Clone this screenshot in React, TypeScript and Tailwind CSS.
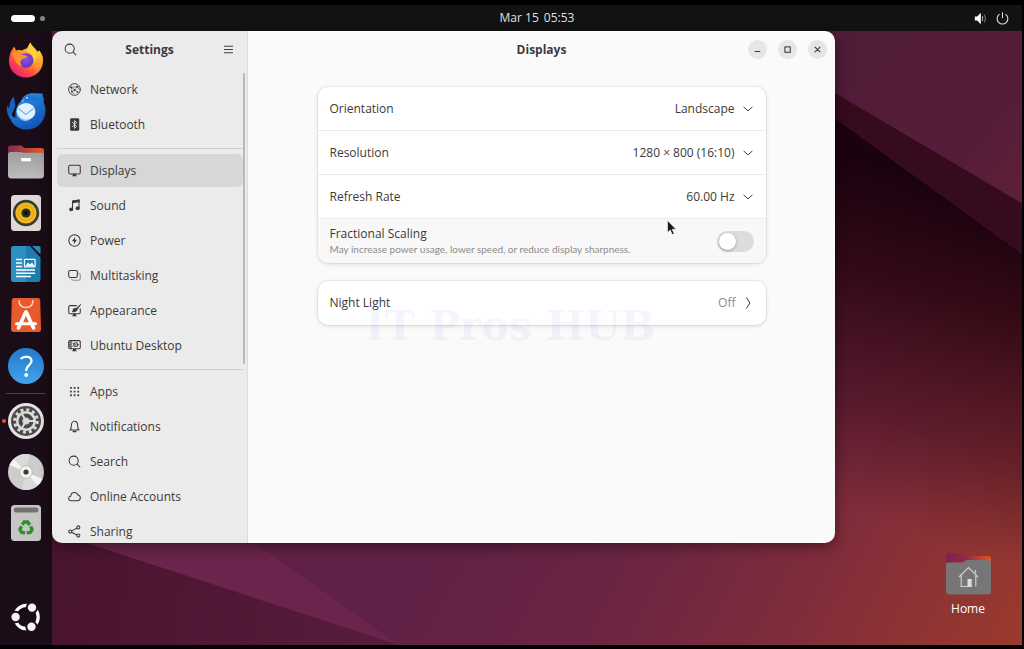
import { useState } from "react";
import type { ReactNode } from "react";

type IconProps = { className?: string };

function Symbolic({ className = "size-[13px]", children }: IconProps & { children: ReactNode }) {
  return (
    <svg
      viewBox="0 0 16 16"
      className={`shrink-0 ${className}`}
      fill="none"
      stroke="currentColor"
      strokeWidth="1.3"
      strokeLinecap="round"
      strokeLinejoin="round"
      aria-hidden="true"
    >
      {children}
    </svg>
  );
}

const SearchIcon = ({ className }: IconProps) => (
  <Symbolic className={className}>
    <circle cx="7" cy="7" r="5.6" />
    <path d="M11.2 11.2 14.6 14.6" />
  </Symbolic>
);

const NetworkIcon = () => (
  <Symbolic>
    <circle cx="8" cy="8" r="7.2" strokeWidth="1.2" />
    <path d="M4 5.2 11.5 4.6 8.2 8.6 4 5.2 4.8 10.6 8.2 8.6 11.6 11M11.5 4.6 13.8 8M4.8 10.6 7.6 13.4" strokeWidth="0.7" />
    <g fill="currentColor" stroke="none">
      <circle cx="4" cy="5.2" r="1.2" />
      <circle cx="11.5" cy="4.6" r="1.3" />
      <circle cx="8.2" cy="8.6" r="1.2" />
      <circle cx="4.8" cy="10.8" r="1.1" />
      <circle cx="11.6" cy="11" r="1.1" />
    </g>
  </Symbolic>
);

const BluetoothIcon = () => (
  <Symbolic>
    <rect x="2.6" y="0.2" width="11.2" height="15.6" rx="1.6" fill="currentColor" stroke="none" />
    <path d="M5.4 5.2 10.6 10.4 8.1 12.8V3.2L10.6 5.6 5.4 10.8" stroke="#ebebeb" strokeWidth="1.1" />
  </Symbolic>
);

const DisplayIcon = () => (
  <Symbolic>
    <rect x="0.9" y="1.6" width="14.2" height="10.6" rx="1.8" />
    <path d="M6.2 12h3.6v1.6l1.4 1.6H4.8l1.4-1.6z" fill="currentColor" stroke="none" />
  </Symbolic>
);

const SoundIcon = () => (
  <Symbolic>
    <path d="M5.6 12.6V2.8L13.6 1.4V11" />
    <path d="M5 1.9 14.3 0.5V3.9L5 5.3z" fill="currentColor" stroke="none" />
    <circle cx="3.9" cy="12.8" r="2.4" fill="currentColor" stroke="none" />
    <circle cx="11.9" cy="11.4" r="2.4" fill="currentColor" stroke="none" />
  </Symbolic>
);

const PowerIcon = () => (
  <Symbolic>
    <circle cx="8" cy="8" r="7" />
    <path d="M8.9 3.4 4.9 8.8H7.5L7.1 12.6 11.1 7.2H8.5z" fill="currentColor" stroke="none" />
  </Symbolic>
);

const MultitaskingIcon = () => (
  <Symbolic>
    <rect x="0.8" y="1.8" width="10.8" height="8.6" rx="2" />
    <path d="M13.4 5.2c1 .2 1.7.8 1.7 1.9v4.6c0 1.4-.8 2.2-2.2 2.2H6.6c-1.2 0-1.9-.5-2.1-1.4" opacity="0.5" />
  </Symbolic>
);

const AppearanceIcon = () => (
  <Symbolic>
    <path d="M10.4 2H2.7C1.6 2 .9 2.7.9 3.8v6.4c0 1.1.7 1.8 1.8 1.8h10.6c1.1 0 1.8-.7 1.8-1.8V6" />
    <path d="M6.2 12h3.6v1.6l1.4 1.6H4.8l1.4-1.6z" fill="currentColor" stroke="none" />
    <path d="M15.4.6 9.6 5.8l1.4 1.4z" fill="currentColor" strokeWidth="0.8" />
    <path d="M9.4 5c-2.4-.1-3.6 1-3.6 2.8 0 1-.5 1.4-1.4 1.6 2.8 1.4 7 .4 6.9-2.7z" fill="currentColor" stroke="none" />
  </Symbolic>
);

const UbuntuDesktopIcon = () => (
  <Symbolic>
    <rect x="0.9" y="2" width="14.2" height="10" rx="1.4" />
    <path d="M3.8 2v10M1.2 4.6h2M1.2 7h2M1.2 9.4h2" strokeWidth="1.2" />
    <circle cx="9.6" cy="7" r="2.3" />
    <path d="M5.8 5.2 7 6M5.8 9 7 8M13 7H12" strokeWidth="1.1" />
    <circle cx="9.6" cy="7" r="0.7" fill="currentColor" stroke="none" />
    <path d="M6.2 12h3.6v1.6l1.4 1.6H4.8l1.4-1.6z" fill="currentColor" stroke="none" />
  </Symbolic>
);

const AppsIcon = () => (
  <Symbolic>
    <g fill="currentColor" stroke="none">
      {[2.5, 7, 11.5].map((y) =>
        [2.5, 7, 11.5].map((x) => <rect key={`${x}-${y}`} x={x} y={y} width="2.2" height="2.2" rx="0.4" />)
      )}
    </g>
  </Symbolic>
);

const BellIcon = () => (
  <Symbolic>
    <path d="M2.4 12.4C4 11.2 4.1 9.6 4.1 7c0-3 1.4-5.4 3.9-5.4S11.9 4 11.9 7c0 2.6.1 4.2 1.7 5.4z" />
    <path d="M6.4 14.2h3.2" strokeWidth="1.8" />
  </Symbolic>
);

const CloudIcon = () => (
  <Symbolic>
    <path d="M4 13.2c-1.9 0-3.2-1.1-3.2-2.7 0-1.5 1-2.5 2.5-2.7C3.5 5 5.3 3 7.9 3c2.2 0 3.7 1.2 4.3 3.2 1.9.3 3 1.6 3 3.4 0 2.2-1.5 3.6-3.7 3.6z" />
  </Symbolic>
);

const ShareIcon = () => (
  <Symbolic>
    <path d="M4.4 7.2 10.9 3.9M4.4 9 10.9 12.2" />
    <circle cx="2.8" cy="8.1" r="1.9" />
    <circle cx="12.7" cy="3" r="1.9" />
    <circle cx="12.7" cy="13" r="1.9" />
  </Symbolic>
);

const groups = [
  [
    { label: "Network", icon: NetworkIcon },
    { label: "Bluetooth", icon: BluetoothIcon },
  ],
  [
    { label: "Displays", icon: DisplayIcon },
    { label: "Sound", icon: SoundIcon },
    { label: "Power", icon: PowerIcon },
    { label: "Multitasking", icon: MultitaskingIcon },
    { label: "Appearance", icon: AppearanceIcon },
    { label: "Ubuntu Desktop", icon: UbuntuDesktopIcon },
  ],
  [
    { label: "Apps", icon: AppsIcon },
    { label: "Notifications", icon: BellIcon },
    { label: "Search", icon: SearchIcon },
    { label: "Online Accounts", icon: CloudIcon },
    { label: "Sharing", icon: ShareIcon },
  ],
];

const displayOptions = [
  { id: "orientation", label: "Orientation", options: ["Landscape", "Portrait Right", "Portrait Left"] },
  { id: "resolution", label: "Resolution", options: ["1280 × 800 (16:10)", "1024 × 768 (4:3)"] },
  { id: "refresh-rate", label: "Refresh Rate", options: ["60.00 Hz", "75.00 Hz"] },
];

/* Dock icons */

const FirefoxIcon = () => (
  <svg viewBox="0 0 36 36" className="size-9" aria-hidden="true">
    <defs>
      <linearGradient id="ff-body" x1="0.85" y1="0.1" x2="0.2" y2="0.95">
        <stop offset="0" stopColor="#ffe14a" />
        <stop offset="0.4" stopColor="#ff9a2c" />
        <stop offset="0.7" stopColor="#ff4a45" />
        <stop offset="1" stopColor="#e3217c" />
      </linearGradient>
      <linearGradient id="ff-flame" x1="0.4" y1="0" x2="0.5" y2="1">
        <stop offset="0" stopColor="#ffe24d" />
        <stop offset="0.5" stopColor="#ffc63a" />
        <stop offset="1" stopColor="#ff8a33" />
      </linearGradient>
      <radialGradient id="ff-globe" cx="0.5" cy="0.4" r="0.6">
        <stop offset="0" stopColor="#9250e8" />
        <stop offset="1" stopColor="#5a3bb5" />
      </radialGradient>
    </defs>
    <path d="M3 9.5 6.2 4.5 8 8.5 11 7.8 14 8.5C16 7 18 6.5 19 6.5 20 4 21.5 1.5 22.5.5 23.5 4 28 6.5 29.5 10L31 8.5C33.5 11 35.2 15 35 19.5 34.5 29 27 35.5 18 35.5 8.5 35.5 1 28.5 1 19 1 15.5 1.8 12 3 9.5z" fill="url(#ff-body)" />
    <path d="M22.5.5C23.5 4 28 6.5 29.5 10.5 32 17 29 24 25 27 31 26 35 22 35 18 35 14 33 10.5 31 8.5L29.5 10C28 6.5 23.5 4 22.5.5z" fill="url(#ff-flame)" />
    <circle cx="18" cy="18.5" r="7.3" fill="url(#ff-globe)" />
    <path d="M4 11C7 9 11 10 13 13 15 12.8 17.5 13.2 19 14.5 18 16.5 15.5 16.2 14 17.5 12 19 12 22 14.5 23.8 11 24.5 6 20 4 11z" fill="#ff9130" />
    <path d="M18.5 9.5C20 5.5 21.5 2.5 22.5.5 23 5 27.5 7.5 28.5 12 29 15 28 18 26.2 20.5 26.5 15 24 11 18.5 9.5z" fill="#ffd040" />
  </svg>
);

const ThunderbirdIcon = () => (
  <svg viewBox="0 0 40 38" className="h-[38px] w-10" aria-hidden="true">
    <defs>
      <linearGradient id="tb-body" x1="0.2" y1="0" x2="0.6" y2="1">
        <stop offset="0" stopColor="#2f8fe6" />
        <stop offset="1" stopColor="#0f55b8" />
      </linearGradient>
    </defs>
    <path d="M7.5 4.5C9 8 8.5 11 9.5 14L4 27C.5 21 .5 17 1 13.5L3 16C3.5 11 5 7 7.5 4.5z" fill="#1761bb" />
    <path d="M15 9C17 3.5 22 1 27.5 1.2L36.5 1.5 37 4.5 38 8 37.5 10C40 15 40 20 38.5 24.5 36 33 28.5 37.5 20.5 37.5 10.5 37.5 2.5 30 3.5 20 4.5 23 7 25 9.5 26 9 18 11 12.5 15 9z" fill="url(#tb-body)" />
    <path d="M16 9C19 4 24 2.5 29 4 33 6 35 9 35.5 13 31 8 26 7.5 22 9z" fill="#1d74d2" />
    <ellipse cx="20" cy="19.5" rx="9.4" ry="8.6" fill="#e2f1fd" />
    <path d="M12.5 16.5 19.8 22.5 27.5 16.5" fill="none" stroke="#7fb4e5" strokeWidth="1.2" />
    <path d="M10.700 20C11.500 26 16 30.500 23.500 29 18 28 13 25.500 10.700 20z" fill="#8bc5f5" />
    <circle cx="21" cy="5.8" r="0.9" fill="#dcecff" />
    <path d="M15 9 19 6.8 17 10z" fill="#b88ae0" />
  </svg>
);

const FilesIcon = () => (
  <svg viewBox="0 0 36 34" className="h-[34px] w-9" aria-hidden="true">
    <defs>
      <linearGradient id="files-back" x1="0" x2="1">
        <stop offset="0" stopColor="#842a4b" />
        <stop offset="1" stopColor="#e65a25" />
      </linearGradient>
      <linearGradient id="files-front" x1="0" y1="0" x2="0" y2="1">
        <stop offset="0" stopColor="#9d9d9d" />
        <stop offset="1" stopColor="#bdbdbd" />
      </linearGradient>
    </defs>
    <path d="M0 3Q0 .5 2.5.5H13L16.5 3H33.5Q36 3 36 5.5V14H0z" fill="url(#files-back)" />
    <path d="M0 9.5Q0 7 2.5 7H12L16 7.8H33.5Q36 7.8 36 10V30Q36 33.5 32.5 33.5H3.5Q0 33.5 0 30z" fill="url(#files-front)" />
    <rect x="13" y="13" width="10" height="3.2" rx="1" fill="#fff" />
  </svg>
);

const RhythmboxIcon = () => (
  <svg viewBox="0 0 36 36" className="size-9" aria-hidden="true">
    <rect x="3" y="0" width="30" height="36" rx="3.5" fill="#dedad3" />
    <circle cx="18" cy="18" r="13.2" fill="#3b3a36" />
    <circle cx="18" cy="18" r="10.6" fill="#f0b91d" />
    <circle cx="18" cy="18" r="7.5" fill="none" stroke="#d99d10" strokeWidth="0.8" />
    <circle cx="18" cy="18" r="4.6" fill="#2d2a22" />
    <circle cx="18" cy="18" r="2" fill="#111" />
  </svg>
);

const WriterIcon = () => (
  <svg viewBox="0 0 36 36" className="size-9" aria-hidden="true">
    <path d="M6 0H22L32.5 11.5V33Q32.5 36 29.5 36H6Q3 36 3 33V3Q3 0 6 0z" fill="#1e7cae" />
    <path d="M6 0H18V36H6Q3 36 3 33V3Q3 0 6 0z" fill="#2b91c2" />
    <path d="M24 0H31Q32.5 0 32.5 1.5V8.5z" fill="#2689ba" />
    <path d="M8 13.5h6M8 17h6M8 20.5h6M8 24h19M8 27.2h19M8 30.5h15" stroke="#fff" strokeWidth="1.5" fill="none" />
    <rect x="16.5" y="13.3" width="10.6" height="7.6" rx="0.6" fill="#2581b2" stroke="#fff" strokeWidth="1.2" />
    <path d="M17.5 20 20 16.5 22 18.5 24 16.5 26.5 20z" fill="#fff" />
  </svg>
);

const AppCenterIcon = () => (
  <svg viewBox="0 0 36 36" className="size-9" aria-hidden="true">
    <path d="M6 1H30Q32 1 32.2 3L33 32Q33 35 30.5 35H5.5Q3 35 3 32L3.8 3Q4 1 6 1z" fill="#e8592b" />
    <path d="M11 3C11 8 14 10.5 18 10.5S25 8 25 3" fill="none" stroke="#f9d5c7" strokeWidth="1.4" />
    <path d="M17.8 15 10.5 31M18.2 15 25.5 31" stroke="#fff" strokeWidth="3.6" strokeLinecap="round" />
    <path d="M8.5 26.8H27.5" stroke="#fff" strokeWidth="3" strokeLinecap="round" />
  </svg>
);

const HelpIcon = () => (
  <svg viewBox="0 0 36 36" className="size-9" aria-hidden="true">
    <defs>
      <linearGradient id="help-bg" x1="0" y1="0" x2="0" y2="1">
        <stop offset="0" stopColor="#2479cb" />
        <stop offset="1" stopColor="#41a3ec" />
      </linearGradient>
    </defs>
    <circle cx="18" cy="18" r="18" fill="url(#help-bg)" />
    <path d="M13.4 10.3C16 8.2 23.5 7.8 23.5 13 23.5 17 18.2 17.2 18.2 22.2" fill="none" stroke="#fff" strokeWidth="2.3" strokeLinecap="round" />
    <circle cx="18.2" cy="27" r="2" fill="#fff" />
  </svg>
);

const SettingsIcon = () => (
  <svg viewBox="0 0 36 36" className="size-9" aria-hidden="true">
    <circle cx="18" cy="18" r="18" fill="#e4e4e2" />
    <circle cx="18" cy="18" r="15" fill="#4a4a48" />
    <circle cx="18" cy="18" r="11.3" fill="none" stroke="#dcdcda" strokeWidth="3" strokeDasharray="2.9 3.017" />
    <circle cx="18" cy="18" r="8.8" fill="none" stroke="#dcdcda" strokeWidth="2.6" />
    <circle cx="18" cy="18" r="3.6" fill="#d0d0ce" />
    <path d="M18 18H26M18 18 14 11.1M18 18 14 24.9" stroke="#dcdcda" strokeWidth="2" />
  </svg>
);

const DiscIcon = () => (
  <svg viewBox="0 0 36 36" className="size-9" aria-hidden="true">
    <circle cx="18" cy="18" r="18" fill="#cdcdcd" />
    <path d="M18 18 1.5 11A18 18 0 0 1 6 4.7zM18 18 34.5 25A18 18 0 0 1 29.5 31.8z" fill="#f5f5f5" />
    <path d="M18 18 6 4.7A18 18 0 0 1 22 .5z" fill="#dadada" />
    <path d="M18 18 29.5 31.8A18 18 0 0 1 14 35.5z" fill="#dadada" />
    <circle cx="18" cy="18" r="6.3" fill="#f4f4f1" stroke="#b3b0a2" strokeWidth="0.8" />
    <circle cx="18" cy="18" r="2.6" fill="#3c3c3c" />
  </svg>
);

const TrashIcon = () => (
  <svg viewBox="0 0 36 36" className="size-9" aria-hidden="true">
    <rect x="3" y="0" width="30" height="36" rx="3.5" fill="#c6c6c6" />
    <rect x="5.8" y="2.5" width="24.5" height="5" rx="2.2" fill="#727272" />
    <g fill="none" stroke="#2f8f2c" strokeWidth="3.4">
      <path d="M14.2 19.8 16.3 17H19.7L21.8 20" />
      <path d="M14.2 19.8 16.3 17H19.7L21.8 20" transform="rotate(120 18 23)" />
      <path d="M14.2 19.8 16.3 17H19.7L21.8 20" transform="rotate(240 18 23)" />
    </g>
  </svg>
);

const UbuntuLogo = () => (
  <svg viewBox="0 0 36 36" className="size-9" aria-hidden="true">
    <circle cx="18.5" cy="18" r="11.7" fill="none" stroke="#fff" strokeWidth="3.2" />
    <g fill="#f7f4f6" stroke="#1d1119" strokeWidth="2">
      <circle cx="7.6" cy="18" r="5.2" />
      <circle cx="24" cy="8.6" r="5.2" />
      <circle cx="23.5" cy="27.8" r="5.2" />
    </g>
  </svg>
);

const dockApps = [
  { name: "Firefox", icon: FirefoxIcon },
  { name: "Thunderbird Mail", icon: ThunderbirdIcon },
  { name: "Files", icon: FilesIcon },
  { name: "Rhythmbox", icon: RhythmboxIcon },
  { name: "LibreOffice Writer", icon: WriterIcon },
  { name: "App Center", icon: AppCenterIcon },
  { name: "Help", icon: HelpIcon },
];

const dockRunning = [
  { name: "Settings", icon: SettingsIcon, running: true },
  { name: "Disc", icon: DiscIcon },
  { name: "Trash", icon: TrashIcon },
];

function DockButton({ name, icon: Icon, running }: { name: string; icon: () => ReactNode; running?: boolean }) {
  return (
    <button type="button" aria-label={name} className="relative flex h-9 w-full items-center justify-center">
      {running && <span className="absolute left-[2px] size-1 rounded-full bg-[#e0532b]" />}
      <Icon />
    </button>
  );
}

function Dock() {
  return (
    <nav aria-label="Dock" className="flex w-[52px] shrink-0 flex-col bg-[#1b0d17] pt-[11px] pb-[10px]">
      <div className="flex flex-col gap-[15px]">
        {dockApps.map((app) => (
          <DockButton key={app.name} {...app} />
        ))}
      </div>
      <hr className="mx-[6px] my-[9px] border-[#4a3f47]" />
      <div className="flex flex-col gap-[15px]">
        {dockRunning.map((app) => (
          <DockButton key={app.name} {...app} />
        ))}
      </div>
      <div className="mt-auto">
        <DockButton name="Show Apps" icon={UbuntuLogo} />
      </div>
    </nav>
  );
}

function TopBar() {
  return (
    <header className="grid h-[26px] shrink-0 grid-cols-3 items-center bg-[#121212] text-[#e0e0e0]">
      <button type="button" aria-label="Activities" className="ml-[11px] flex items-center gap-[5px] justify-self-start">
        <span className="h-[7px] w-6 rounded-full bg-white" />
        <span className="size-[5px] rounded-full bg-[#848484]" />
      </button>
      <button type="button" className="ml-[52px] flex gap-[5px] justify-self-center whitespace-nowrap">
        <span>Mar 15</span>
        <span>05:53</span>
      </button>
      <button type="button" aria-label="System menu" className="mr-[13px] flex items-center gap-[9px] justify-self-end">
        <Symbolic className="size-[13px]">
          <path d="M1 5.4H4L8.4 1V15L4 10.6H1z" fill="#fff" stroke="none" />
          <path d="M10.2 5.6Q11.8 8 10.2 10.4" stroke="#bbb" />
          <path d="M12.6 3.6Q15.6 8 12.6 12.4" stroke="#777" />
        </Symbolic>
        <Symbolic className="size-[13px]">
          <path d="M4 3A6.6 6.6 0 1 0 12 3M8 1V7" />
        </Symbolic>
      </button>
    </header>
  );
}

function Wallpaper() {
  return (
    <svg
      viewBox="52 31 970 613"
      preserveAspectRatio="none"
      className="absolute inset-0 size-full"
      aria-hidden="true"
    >
      <defs>
        <linearGradient id="wall-base" gradientUnits="userSpaceOnUse" x1="500" y1="420" x2="1000" y2="680">
          <stop offset="0" stopColor="#602146" />
          <stop offset="0.3" stopColor="#6a2443" />
          <stop offset="0.65" stopColor="#812d3a" />
          <stop offset="1" stopColor="#9a3a2d" />
        </linearGradient>
        <linearGradient id="wall-shade" gradientUnits="userSpaceOnUse" x1="928" y1="185" x2="820" y2="500">
          <stop offset="0" stopColor="#1b020f" />
          <stop offset="0.3" stopColor="#26040f" stopOpacity="0.85" />
          <stop offset="0.7" stopColor="#30071a" stopOpacity="0.45" />
          <stop offset="1" stopColor="#3a0a20" stopOpacity="0" />
        </linearGradient>
        <linearGradient id="wall-top" gradientUnits="userSpaceOnUse" x1="835" y1="40" x2="1022" y2="210">
          <stop offset="0" stopColor="#501c38" />
          <stop offset="0.7" stopColor="#561d3a" />
          <stop offset="1" stopColor="#5f2036" />
        </linearGradient>
        <linearGradient id="wall-left" gradientUnits="userSpaceOnUse" x1="52" y1="600" x2="380" y2="644">
          <stop offset="0" stopColor="#49142f" />
          <stop offset="1" stopColor="#571c3c" />
        </linearGradient>
      </defs>
      <rect x="52" y="31" width="970" height="613" fill="url(#wall-base)" />
      <path d="M600 -52 1022 253V644H600z" fill="url(#wall-shade)" />
      <path d="M600 31 835 118 1022 253V31z" fill="#350b1d" />
      <path d="M600 31H1022V203L835 93 600 -45z" fill="url(#wall-top)" />
      <path d="M52 530 89 543 399 644H52z" fill="url(#wall-left)" />
      <path d="M89 543H256L399 644z" fill="#6b244b" />
    </svg>
  );
}

function Sidebar() {
  const [active, setActive] = useState("Displays");

  return (
    <aside className="relative flex w-[196px] shrink-0 flex-col border-r border-[#dcdcdc] bg-[#ebebeb]">
      <div className="flex h-[37px] shrink-0 items-center justify-between px-3">
        <button type="button" aria-label="Search settings">
          <SearchIcon />
        </button>
        <h2 className="font-bold">Settings</h2>
        <button type="button" aria-label="Main menu">
          <Symbolic>
            <path d="M3 4H13M3 8H13M3 12H13" strokeWidth="1.2" />
          </Symbolic>
        </button>
      </div>
      <nav
        aria-label="Settings panels"
        className="flex min-h-0 flex-1 flex-col gap-[2px] overflow-y-auto pt-[5px] pr-1 pl-[5px] [scrollbar-width:none]"
      >
        {groups.map((group, i) => (
          <div key={i} className="flex shrink-0 flex-col gap-[2px]">
            {i > 0 && <hr className="mt-[5px] mb-[3px] border-[#d0d0d0]" />}
            {group.map(({ label, icon: Icon }) => (
              <button
                key={label}
                type="button"
                onClick={() => setActive(label)}
                aria-current={active === label ? "page" : undefined}
                className={`flex h-[33px] shrink-0 items-center gap-[9px] rounded-md pl-[11px] text-left ${
                  active === label ? "bg-[#d7d7d7]" : "hover:bg-[#e0e0e0]"
                }`}
              >
                <Icon />
                {label}
              </button>
            ))}
          </div>
        ))}
      </nav>
      {/* scrollbar thumb */}
      <span className="absolute top-[42px] right-[2px] h-[291px] w-[2px] rounded-full bg-[#b9b9b9]" />
    </aside>
  );
}

function WindowControls() {
  return (
    <div className="flex items-center justify-end gap-[11px]">
      <button type="button" aria-label="Minimize" className="flex size-[19px] items-center justify-center rounded-full bg-[#e6e6e6]">
        <Symbolic>
          <path d="M5 10.5H11" />
        </Symbolic>
      </button>
      <button type="button" aria-label="Maximize" className="flex size-[19px] items-center justify-center rounded-full bg-[#e6e6e6]">
        <Symbolic>
          <rect x="4.8" y="4.8" width="6.6" height="6.6" strokeLinejoin="miter" />
        </Symbolic>
      </button>
      <button type="button" aria-label="Close" className="flex size-[19px] items-center justify-center rounded-full bg-[#e6e6e6]">
        <Symbolic>
          <path d="M5 5 11 11M11 5 5 11" />
        </Symbolic>
      </button>
    </div>
  );
}

function DisplaysPanel() {
  const [scaling, setScaling] = useState(false);

  return (
    <main className="relative flex min-w-0 flex-1 flex-col bg-[#fafafa]">
      <div className="grid h-[37px] shrink-0 grid-cols-[1fr_auto_1fr] items-center px-2">
        <span />
        <h1 className="font-bold">Displays</h1>
        <WindowControls />
      </div>
      <div className="mx-auto flex w-full max-w-[448px] flex-col gap-[18px] pt-[19px]">
        <section className="divide-y divide-[#ececec] overflow-hidden rounded-[10px] bg-white shadow-[0_0_0_1px_rgba(0,0,0,0.04),0_1px_4px_rgba(0,0,0,0.13)]">
          {displayOptions.map(({ id, label, options }) => (
            <div key={id} className="flex h-11 items-center justify-between px-3">
              <label htmlFor={id}>{label}</label>
              <div className="flex items-center gap-[7px]">
                <select id={id} className="appearance-none bg-transparent [field-sizing:content] [text-align-last:right]">
                  {options.map((option) => (
                    <option key={option}>{option}</option>
                  ))}
                </select>
                <Symbolic className="size-[12px]">
                  <path d="M2.5 5.5 8 10.5 13.5 5.5" />
                </Symbolic>
              </div>
            </div>
          ))}
          <div className="flex h-11 items-center justify-between bg-[#f8f8f8] px-3">
            <label htmlFor="fractional-scaling" className="flex flex-col">
              <span className="leading-4">Fractional Scaling</span>
              <span className="font-['Lato','Open_Sans',sans-serif] text-[10px] leading-[14px] text-[#8c8c8c]">
                May increase power usage, lower speed, or reduce display sharpness.
              </span>
            </label>
            <input
              id="fractional-scaling"
              type="checkbox"
              role="switch"
              checked={scaling}
              onChange={(e) => setScaling(e.target.checked)}
              className="flex h-[21px] w-[37px] appearance-none items-center rounded-full bg-[#dcdcdc] p-[2px] before:size-[17px] before:rounded-full before:bg-white before:shadow-[0_1px_3px_rgba(0,0,0,0.3)] checked:justify-end checked:bg-[#e95420]"
            />
          </div>
        </section>
        <section className="rounded-[10px] bg-white shadow-[0_0_0_1px_rgba(0,0,0,0.04),0_1px_4px_rgba(0,0,0,0.13)]">
          <button type="button" className="flex h-11 w-full items-center justify-between px-3">
            <span>Night Light</span>
            <span className="flex items-center gap-[6px] text-[#8c8c8c]">
              Off
              <Symbolic className="size-[12px] text-[#333]">
                <path d="M6 1 10.5 8 6 15" />
              </Symbolic>
            </span>
          </button>
        </section>
      </div>
      {/* Channel watermark sits over the cards */}
      <p className="pointer-events-none absolute top-[274px] left-[117px] font-['DejaVu_Serif',serif] text-[41px] leading-[42px] font-bold whitespace-nowrap text-[#6464e6]/8">
        IT Pros HUB
      </p>
      <svg viewBox="0 0 10 16" className="pointer-events-none absolute top-[189px] left-[419px] h-4 w-[10px]" aria-hidden="true">
        <path d="M.5.5V12.5L3.3 10 5.2 14.6 7.2 13.7 5.2 9.3H9z" fill="#1c1c1c" stroke="#fff" strokeWidth="0.6" />
      </svg>
    </main>
  );
}

function HomeFolder() {
  return (
    <button type="button" className="flex w-20 flex-col items-center gap-1 text-white">
      <svg viewBox="0 0 45 42" className="h-[42px] w-[45px]" aria-hidden="true">
        <defs>
          <linearGradient id="home-back" x1="0" x2="1">
            <stop offset="0" stopColor="#7c2352" />
            <stop offset="0.45" stopColor="#932a45" />
            <stop offset="1" stopColor="#e8541f" />
          </linearGradient>
        </defs>
        <path d="M0 3Q0 .5 2.5.5H16L19.5 3H42Q45 3 45 6V14H0z" fill="url(#home-back)" />
        <path d="M0 12Q0 9.5 2.5 9.5H16.5L20.5 7H42Q45 7 45 10V38Q45 41.5 41.5 41.5H3.5Q0 41.5 0 38z" fill="#777575" />
        <path d="M13 24 22.5 14.5 32 24M15.2 22.5V33.5H26M29.8 22.5V33.5M29.5 17V20" fill="none" stroke="#d0cece" strokeWidth="1.2" />
        <rect x="21.5" y="26" width="4.2" height="7.5" fill="#dedede" />
      </svg>
      <span className="leading-5">Home</span>
    </button>
  );
}

export default function App() {
  return (
    <div className="flex h-screen flex-col bg-black pt-[5px] pr-[2px] pb-[4px] font-['Open_Sans','Noto_Sans',sans-serif] text-[12px] leading-4 text-[#3a3a3a]">
      <TopBar />
      <div className="flex min-h-0 flex-1">
        <Dock />
        <div className="relative flex min-w-0 flex-1">
          <Wallpaper />
          <div className="relative mb-[102px] flex min-w-0 flex-1 overflow-hidden rounded-[10px] shadow-[0_3px_14px_rgba(0,0,0,0.45)]">
            <Sidebar />
            <DisplaysPanel />
          </div>
          <div className="relative flex w-[187px] shrink-0 flex-col items-end justify-end pr-[14px] pb-[26px]">
            <HomeFolder />
          </div>
        </div>
      </div>
    </div>
  );
}
